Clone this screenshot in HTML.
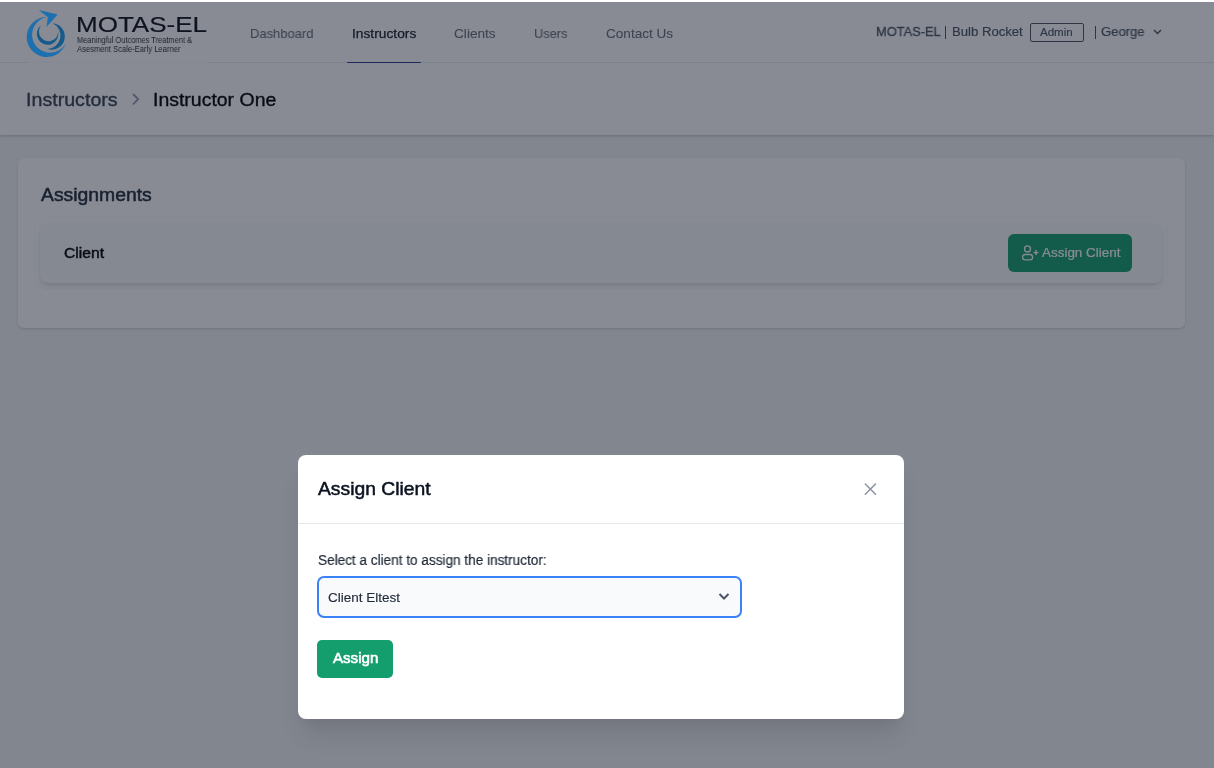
<!DOCTYPE html>
<html>
<head>
<meta charset="utf-8">
<style>
*{box-sizing:border-box;margin:0;padding:0}
html,body{width:1214px;height:768px;overflow:hidden}
body{background:#f3f4f6;font-family:"Liberation Sans",sans-serif;position:relative;color:#111827}
.abs{position:absolute}
.t{position:absolute;white-space:nowrap;line-height:1;font-family:"Liberation Sans",sans-serif;will-change:transform}
#header{left:0;top:0;width:1214px;height:63px;background:#fff;border-bottom:1px solid #eceef1}
#logo{left:26px;top:6px;width:182px;height:57px;background:#fff}
#crumb{left:0;top:63px;width:1214px;height:72px;background:#fff;box-shadow:0 1px 3px rgba(0,0,0,.12),0 1px 2px rgba(0,0,0,.08)}
#card{left:18px;top:158px;width:1167px;height:170px;background:#fff;border-radius:6px;box-shadow:0 1px 3px rgba(0,0,0,.1),0 1px 2px rgba(0,0,0,.06)}
#row{left:40px;top:223px;width:1122px;height:60px;background:#f9fafb;border-radius:8px;box-shadow:0 4px 6px -1px rgba(0,0,0,.1),0 2px 4px -1px rgba(0,0,0,.06)}
#abtn{left:1008px;top:234px;width:124px;height:38px;background:#149e6e;border-radius:6px}
#overlay{left:0;top:2px;width:1214px;height:766px;background:rgba(17,24,39,.5)}
#modal{left:298px;top:455px;width:606px;height:264px;background:#fff;border-radius:8px;box-shadow:0 20px 25px -5px rgba(0,0,0,.1),0 10px 10px -5px rgba(0,0,0,.04)}
#mdiv{left:298px;top:523px;width:606px;height:1px;background:#e5e7eb}
#sel{left:317px;top:576px;width:425px;height:42px;background:#f9fafb;border:2px solid #3b82f6;border-radius:7px}
#mbtn{left:317px;top:640px;width:76px;height:38px;background:#149e6e;border-radius:5px}
</style>
</head>
<body>
<div id="header" class="abs"></div>
<div id="logo" class="abs"></div>
<div class="t" style="left:76px;top:13.92px;font-size:22.07px;color:#0b0f19;letter-spacing:0.000px;-webkit-text-stroke:0.2px #0b0f19;transform:scaleX(1.1785);transform-origin:0 0;">MOTAS-EL</div><div class="t" style="left:77px;top:35.89px;font-size:8.52px;color:#2b2f36;letter-spacing:0.000px;transform:scaleX(0.8739);transform-origin:0 0;">Meaningful Outcomes Treatment &amp;</div><div class="t" style="left:77px;top:44.59px;font-size:8.52px;color:#2b2f36;letter-spacing:0.000px;transform:scaleX(0.8961);transform-origin:0 0;">Asesment Scale-Early Learner</div>
<div class="t" style="left:249.6px;top:26.85px;font-size:13.41px;color:#66707e;letter-spacing:0.000px;-webkit-text-stroke:0.1px #66707e;transform:scaleX(0.9666);transform-origin:0 0;">Dashboard</div><div class="t" style="left:351.7px;top:26.85px;font-size:13.41px;color:#111827;letter-spacing:0.000px;-webkit-text-stroke:0.25px #111827;transform:scaleX(1.0273);transform-origin:0 0;">Instructors</div><div class="t" style="left:454px;top:26.85px;font-size:13.41px;color:#66707e;letter-spacing:0.000px;-webkit-text-stroke:0.1px #66707e;transform:scaleX(1.0175);transform-origin:0 0;">Clients</div><div class="t" style="left:534px;top:26.85px;font-size:13.41px;color:#66707e;letter-spacing:0.000px;-webkit-text-stroke:0.1px #66707e;transform:scaleX(0.9539);transform-origin:0 0;">Users</div><div class="t" style="left:605.7px;top:26.85px;font-size:13.41px;color:#66707e;letter-spacing:0.000px;-webkit-text-stroke:0.1px #66707e;transform:scaleX(1.0119);transform-origin:0 0;">Contact Us</div>
<div class="abs" style="left:347.2px;top:61.5px;width:73.5px;height:2.1px;border-radius:1px;background:#1e3a8a"></div>
<div class="t" style="left:876px;top:25.19px;font-size:13.13px;color:#4b5563;letter-spacing:0.000px;-webkit-text-stroke:0.3px #4b5563;transform:scaleX(0.9784);transform-origin:0 0;">MOTAS-EL</div>
<div class="abs" style="left:945.2px;top:26.2px;width:1.2px;height:12.6px;background:#4b5563"></div>
<div class="t" style="left:951.6px;top:25.19px;font-size:13.13px;color:#4b5563;letter-spacing:0.000px;-webkit-text-stroke:0.2px #4b5563;transform:scaleX(0.9934);transform-origin:0 0;">Bulb Rocket</div>
<div class="abs" style="left:1030px;top:23px;width:54px;height:19px;border:1.2px solid #4b5563;border-radius:2px"></div>
<div class="t" style="left:1040.2px;top:27.31px;font-size:10.61px;color:#4b5563;letter-spacing:0.000px;-webkit-text-stroke:0.15px #4b5563;transform:scaleX(1.0872);transform-origin:0 0;">Admin</div>
<div class="abs" style="left:1095.3px;top:26px;width:1.2px;height:13px;background:#4b5563"></div>
<div class="t" style="left:1100.9px;top:25.37px;font-size:13.27px;color:#4b5563;letter-spacing:0.000px;-webkit-text-stroke:0.2px #4b5563;transform:scaleX(0.9853);transform-origin:0 0;">George</div>
<svg class="abs" style="left:1152px;top:28px" width="11" height="8" viewBox="0 0 11 8"><path d="M2 2 L5.5 5.5 L9 2" fill="none" stroke="#4b5563" stroke-width="1.5"/></svg>

<div id="crumb" class="abs"></div>
<div class="t" style="left:26.2px;top:90.93px;font-size:18.16px;color:#374151;letter-spacing:0.000px;-webkit-text-stroke:0.35px #374151;transform:scaleX(1.0818);transform-origin:0 0;">Instructors</div>
<svg class="abs" style="left:130px;top:91px" width="12" height="16" viewBox="0 0 12 16"><path d="M3.5 3.5 L8.2 8.2 L3.5 12.9" fill="none" stroke="#949cab" stroke-width="1.9" stroke-linecap="round" stroke-linejoin="round"/></svg>
<div class="t" style="left:153.4px;top:90.93px;font-size:18.16px;color:#000000;letter-spacing:0.000px;-webkit-text-stroke:0.35px #000000;transform:scaleX(1.0717);transform-origin:0 0;">Instructor One</div>

<div id="card" class="abs"></div>
<div class="t" style="left:41.1px;top:184.92px;font-size:18.99px;color:#1f2937;letter-spacing:0.000px;-webkit-text-stroke:0.55px #1f2937;transform:scaleX(1.0185);transform-origin:0 0;">Assignments</div>
<div class="abs" style="left:34px;top:217px;width:1134px;height:72px;border-radius:12px;border:1px solid rgba(0,0,0,.025)"></div>
<div id="row" class="abs"></div>
<div class="t" style="left:64px;top:246.07px;font-size:14.80px;color:#000000;letter-spacing:0.000px;-webkit-text-stroke:0.5px #000000;transform:scaleX(1.0570);transform-origin:0 0;">Client</div>
<div id="abtn" class="abs"></div>
<svg class="abs" style="left:1018px;top:242px" width="24" height="22" viewBox="1018 242 24 22">
  <circle cx="1027.5" cy="248.9" r="3" fill="none" stroke="#fff" stroke-width="1.3"/>
  <rect x="1022.6" y="254.5" width="10" height="5.3" rx="2.6" fill="none" stroke="#fff" stroke-width="1.3"/>
  <path d="M1033.5 252.6 H1038.5 M1036 250.1 V255.1" stroke="#fff" stroke-width="1.4"/>
</svg>
<div class="t" style="left:1041.6px;top:245.89px;font-size:13.13px;color:#ffffff;letter-spacing:0.000px;-webkit-text-stroke:0.2px #ffffff;transform:scaleX(1.0234);transform-origin:0 0;">Assign Client</div>

<div id="overlay" class="abs"></div>
<svg class="abs" style="left:22px;top:6px" width="50" height="57" viewBox="22 6 50 57">
  <path d="M47 17 A20 20 0 1 0 65.5 44 A18 18 0 1 1 47 17 Z" fill="#1c70b0"/>
  <path d="M38.8 10 L57.7 14.4 L46.4 27.1 L47.9 17.2 Z" fill="#1c70b0"/>
  <path d="M52.6 23.3 A13.2 13.2 0 1 1 47.5 49 A13.45 13.45 0 0 0 52.6 23.3 Z" fill="#165a8c"/>
  <path d="M41.7 25 A10.79 10.79 0 1 0 58.1 31.5 A9.57 9.57 0 1 1 41.7 25 Z" fill="#165a8c"/>
</svg>

<div id="modal" class="abs"></div>
<div id="mdiv" class="abs"></div>
<div class="t" style="left:317.7px;top:479.99px;font-size:18.44px;color:#0b1220;letter-spacing:0.000px;-webkit-text-stroke:0.5px #0b1220;transform:scaleX(1.0464);transform-origin:0 0;">Assign Client</div>
<svg class="abs" style="left:864px;top:483px" width="13" height="13" viewBox="0 0 13 13"><path d="M1.3 1 L11.5 11.2 M11.5 1 L1.3 11.2" stroke="#8a93a2" stroke-width="1.5" stroke-linecap="round"/></svg>
<div class="t" style="left:317.7px;top:553.80px;font-size:13.83px;color:#1f2937;letter-spacing:0.000px;-webkit-text-stroke:0.2px #1f2937;transform:scaleX(0.9815);transform-origin:0 0;">Select a client to assign the instructor:</div>
<div id="sel" class="abs"></div>
<div class="t" style="left:327.6px;top:590.77px;font-size:13.27px;color:#1f2937;letter-spacing:0.000px;-webkit-text-stroke:0.15px #1f2937;transform:scaleX(1.0172);transform-origin:0 0;">Client Eltest</div>
<svg class="abs" style="left:718px;top:592px" width="12" height="9" viewBox="0 0 12 9"><path d="M1.5 2 L6 6.5 L10.5 2" fill="none" stroke="#4b5563" stroke-width="2"/></svg>
<div id="mbtn" class="abs"></div>
<div class="t" style="left:332.9px;top:651.27px;font-size:14.80px;color:#ffffff;letter-spacing:0.000px;-webkit-text-stroke:0.6px #ffffff;transform:scaleX(1.0198);transform-origin:0 0;">Assign</div>
</body>
</html>
